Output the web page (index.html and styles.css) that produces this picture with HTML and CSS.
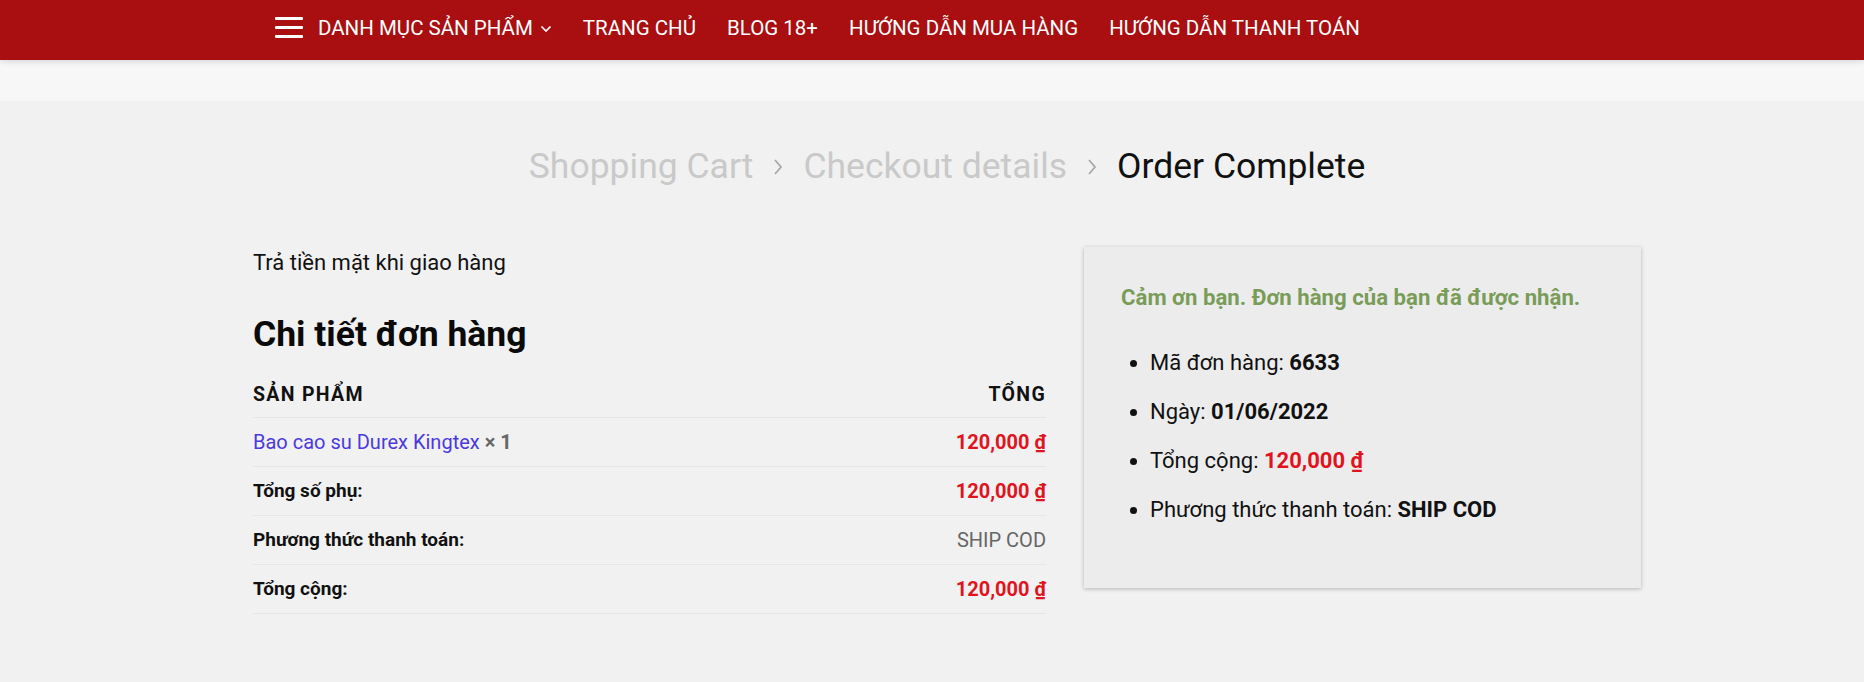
FILE: index.html
```html
<!DOCTYPE html>
<html lang="vi">
<head>
<meta charset="utf-8">
<title>Order Complete</title>
<link rel="stylesheet" href="styles.css">
</head>
<body>
<header class="topnav">
  <nav class="nav-inner">
    <span class="burger" aria-label="menu"><i></i><i></i><i></i></span>
    <a class="nav-item has-drop" href="#">DANH MỤC SẢN PHẨM
      <svg class="chev-down" width="12" height="8" viewBox="0 0 12 8"><path d="M1.5 1.5 L6 6 L10.5 1.5" fill="none" stroke="#fff" stroke-width="1.6"/></svg>
    </a>
    <a class="nav-item" href="#">TRANG CHỦ</a>
    <a class="nav-item" href="#">BLOG 18+</a>
    <a class="nav-item" href="#">HƯỚNG DẪN MUA HÀNG</a>
    <a class="nav-item" href="#">HƯỚNG DẪN THANH TOÁN</a>
  </nav>
</header>
<div class="strip"></div>
<main class="page">
  <div class="steps">
    <span class="step">Shopping Cart</span>
    <svg class="step-sep" width="10" height="18" viewBox="0 0 10 18"><path d="M2 2 L8 9 L2 16" fill="none" stroke="#a8a8a8" stroke-width="1.8"/></svg>
    <span class="step">Checkout details</span>
    <svg class="step-sep" width="10" height="18" viewBox="0 0 10 18"><path d="M2 2 L8 9 L2 16" fill="none" stroke="#a8a8a8" stroke-width="1.8"/></svg>
    <span class="step current">Order Complete</span>
  </div>

  <div class="cols">
    <section class="left">
      <p class="pay-note">Trả tiền mặt khi giao hàng</p>
      <h2 class="details-title">Chi tiết đơn hàng</h2>
      <table class="order-table">
        <thead>
          <tr><th class="c-left">SẢN PHẨM</th><th class="c-right">TỔNG</th></tr>
        </thead>
        <tbody>
          <tr><td class="c-left"><a class="prod" href="#">Bao cao su Durex Kingtex</a> <strong class="qty">× 1</strong></td><td class="c-right price">120,000 ₫</td></tr>
          <tr><td class="c-left label">Tổng số phụ:</td><td class="c-right price">120,000 ₫</td></tr>
          <tr><td class="c-left label">Phương thức thanh toán:</td><td class="c-right method">SHIP COD</td></tr>
          <tr><td class="c-left label">Tổng cộng:</td><td class="c-right price">120,000 ₫</td></tr>
        </tbody>
      </table>
    </section>

    <aside class="summary">
      <p class="thanks">Cảm ơn bạn. Đơn hàng của bạn đã được nhận.</p>
      <ul class="sum-list">
        <li>Mã đơn hàng: <strong>6633</strong></li>
        <li>Ngày: <strong>01/06/2022</strong></li>
        <li>Tổng cộng: <strong class="red">120,000 ₫</strong></li>
        <li>Phương thức thanh toán: <strong>SHIP COD</strong></li>
      </ul>
    </aside>
  </div>
</main>
</body>
</html>
```

FILE: styles.css
```css
* { box-sizing: border-box; }
html, body { margin: 0; padding: 0; }
body {
  background: #f1f1f1;
  font-family: Roboto, "Noto Sans", "Liberation Sans", sans-serif;
  color: #111;
  overflow: hidden;
}
a { text-decoration: none; }

.topnav {
  height: 60px;
  background: #a90e10;
  position: relative;
  z-index: 2;
  box-shadow: 0 2px 6px rgba(0,0,0,0.12);
}
.nav-inner {
  height: 60px;
  display: flex;
  align-items: center;
  padding-left: 275px;
  padding-bottom: 5px;
  gap: 31px;
}
.burger {
  width: 28px;
  height: 21px;
  display: flex;
  flex-direction: column;
  justify-content: space-between;
  margin-right: -16px;
  margin-bottom: 1px;
}
.burger i {
  display: block;
  height: 3px;
  background: #fff;
  border-radius: 1px;
}
.nav-item {
  color: #fff;
  font-size: 20.5px;
  font-weight: 400;
  line-height: 24px;
  display: flex;
  align-items: center;
}
.chev-down { margin-left: 7px; margin-top: 2px; }

.strip {
  height: 41px;
  background: #f7f7f7;
}

.page {
  padding-left: 253px;
  width: 1656px;
}
.steps {
  display: flex;
  align-items: center;
  justify-content: center;
  gap: 20px;
  padding-top: 43px;
  width: 1388px;
}
.step {
  font-size: 35.5px;
  line-height: 44px;
  color: #c9c9c9;
  font-weight: 400;
}
.step.current { color: #111; }
.step-sep { margin-top: 2px; }

.cols {
  display: flex;
  align-items: flex-start;
  gap: 38px;
  margin-top: 59px;
  width: 1388px;
}
.left {
  width: 793px;
  padding-top: 2px;
}
.pay-note {
  margin: 0;
  font-size: 22px;
  line-height: 28px;
}
.details-title {
  margin: 37px 0 0;
  font-size: 35.5px;
  line-height: 40px;
  font-weight: 700;
  color: #0a0a0a;
}
.order-table {
  width: 100%;
  border-collapse: collapse;
  margin-top: 31px;
}
.order-table th {
  font-size: 19.5px;
  font-weight: 700;
  letter-spacing: 1.3px;
  line-height: 20px;
  padding: 0 0 12px;
  border-bottom: 1px solid #e6e6e6;
}
.order-table td {
  font-size: 20px;
  line-height: 20px;
  padding: 14px 0;
  border-bottom: 1px solid #e6e6e6;
}
.c-left { text-align: left; }
.c-right { text-align: right; }
.prod { color: #4b39e0; }
.qty { color: #666; font-weight: 700; }
.order-table td.label { font-weight: 700; color: #111; font-size: 19px; }
.price { color: #e0141e; font-weight: 700; }
.method { color: #666; }

.summary {
  width: 557px;
  background: #ececec;
  box-shadow: 0 1px 4px rgba(0,0,0,0.25);
  padding: 36px 30px 43px 37px;
}
.thanks {
  margin: 0;
  color: #7a9c59;
  font-size: 22.2px;
  font-weight: 700;
  line-height: 28px;
}
.sum-list {
  margin: 38px 0 0;
  padding-left: 29px;
  list-style: disc;
}
.sum-list li {
  font-size: 22px;
  line-height: 28px;
  margin-bottom: 21px;
}
.sum-list strong { font-weight: 700; }
.sum-list .red { color: #e0141e; }
```
